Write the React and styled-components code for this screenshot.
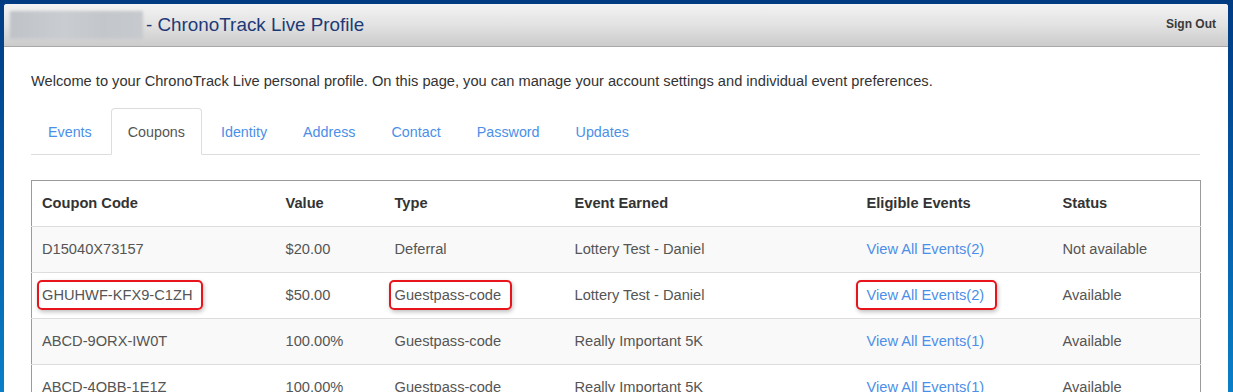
import React from "react";
import styled, { createGlobalStyle } from "styled-components";

const Global = createGlobalStyle`
  html, body { margin: 0; padding: 0; }
  body {
    background: linear-gradient(to bottom, #003b82 0%, #0459a6 45%, #0a86cd 100%);
    min-height: 392px;
    font-family: "Liberation Sans", Arial, sans-serif;
    font-size: 14.65px;
    color: #333;
    overflow: hidden;
  }
  #root { padding: 4px 5px 0 4px; }
`;

const Panel = styled.div`
  background: #fff;
  min-height: 420px;
  border-radius: 3px 3px 0 0;
  overflow: hidden;
`;

const Header = styled.header`
  height: 42px;
  display: flex;
  align-items: center;
  justify-content: space-between;
  padding: 0 12px 0 6px;
  background: linear-gradient(to bottom, #f3f3f3 0%, #e2e2e2 50%, #cbcbcb 100%);
  border-bottom: 1px solid #a9a9a9;
`;

const TitleWrap = styled.div`
  display: flex;
  align-items: center;
  gap: 3px;
`;

const Blur = styled.div`
  width: 133px;
  height: 28px;
  background: linear-gradient(to right, #bfc3c8 0%, #c9ccd0 40%, #c3c6ca 70%, #c6c9cd 100%);
  filter: blur(1.5px);
`;

const Title = styled.h1`
  margin: 0;
  font-size: 18.85px;
  font-weight: normal;
  color: #1d3a78;
`;

const SignOut = styled.a`
  font-size: 12px;
  font-weight: bold;
  color: #3a3a3a;
  text-decoration: none;
  margin-top: -3px;
`;

const Body = styled.div`
  padding: 24px 28px 0 27px;
`;

const Welcome = styled.p`
  margin: 0 0 17px;
  line-height: 20px;
  color: #333;
`;

const Tabs = styled.ul`
  list-style: none;
  margin: 0 0 25px;
  padding: 0;
  display: flex;
  border-bottom: 1px solid #ddd;
`;

const Tab = styled.li`
  margin: 0 2px -1px 0;
  padding: 0 16px;
  height: 45px;
  display: flex;
  align-items: center;
  font-size: 14.3px;
  border: 1px solid ${(p) => (p.$active ? "#ddd" : "transparent")};
  border-bottom-color: ${(p) => (p.$active ? "#fff" : "transparent")};
  border-radius: 4px 4px 0 0;
  background: ${(p) => (p.$active ? "#fff" : "transparent")};
  color: ${(p) => (p.$active ? "#555" : "#4b8fe8")};
`;

const Table = styled.table`
  width: 100%;
  border-collapse: collapse;
  border: 1px solid #9b9b9b;
  table-layout: fixed;
`;

const Th = styled.th`
  text-align: left;
  font-weight: bold;
  color: #333;
  padding: 12px 10px 13px;
  line-height: 20px;
  border-bottom: 1px solid #ddd;
`;

const Row = styled.tr`
  background: ${(p) => (p.$striped ? "#f9f9f9" : "#fff")};
`;

const Td = styled.td`
  padding: 12px 10px 13px;
  line-height: 20px;
  color: #555;
  border-top: 1px solid #ddd;
  white-space: nowrap;
`;

const Link = styled.a`
  color: #4b8fe8;
  text-decoration: none;
`;

const Mark = styled.span`
  position: relative;
  display: inline-block;
  &::after {
    content: "";
    position: absolute;
    top: -5px;
    bottom: -5px;
    left: ${(p) => -p.$l}px;
    right: ${(p) => -p.$r}px;
    border: 2px solid #e8141c;
    border-radius: 5px;
    box-shadow: 1px 2px 4px rgba(0, 0, 0, 0.25);
    pointer-events: none;
  }
`;

const tabs = ["Events", "Coupons", "Identity", "Address", "Contact", "Password", "Updates"];

const rows = [
  { code: "D15040X73157", value: "$20.00", type: "Deferral", event: "Lottery Test - Daniel", n: 2, status: "Not available" },
  { code: "GHUHWF-KFX9-C1ZH", value: "$50.00", type: "Guestpass-code", event: "Lottery Test - Daniel", n: 2, status: "Available", mark: true },
  { code: "ABCD-9ORX-IW0T", value: "100.00%", type: "Guestpass-code", event: "Really Important 5K", n: 1, status: "Available" },
  { code: "ABCD-4OBB-1E1Z", value: "100.00%", type: "Guestpass-code", event: "Really Important 5K", n: 1, status: "Available" },
];

const cols = [244, 109, 180, 292, 196, 148];

export default function App() {
  return (
    <>
      <Global />
      <Panel>
        <Header>
          <TitleWrap>
            <Blur />
            <Title>- ChronoTrack Live Profile</Title>
          </TitleWrap>
          <SignOut href="#">Sign Out</SignOut>
        </Header>
        <Body>
          <Welcome>
            Welcome to your ChronoTrack Live personal profile. On this page, you can manage your account settings and individual event preferences.
          </Welcome>
          <Tabs>
            {tabs.map((t) => (
              <Tab key={t} $active={t === "Coupons"}>{t}</Tab>
            ))}
          </Tabs>
          <Table>
            <colgroup>
              {cols.map((w, i) => (
                <col key={i} style={{ width: w }} />
              ))}
            </colgroup>
            <thead>
              <tr>
                <Th>Coupon Code</Th>
                <Th>Value</Th>
                <Th>Type</Th>
                <Th>Event Earned</Th>
                <Th>Eligible Events</Th>
                <Th>Status</Th>
              </tr>
            </thead>
            <tbody>
              {rows.map((r, i) => (
                <Row key={r.code} $striped={i % 2 === 0}>
                  <Td>{r.mark ? <Mark $l={5} $r={11}>{r.code}</Mark> : r.code}</Td>
                  <Td>{r.value}</Td>
                  <Td>{r.mark ? <Mark $l={6} $r={11}>{r.type}</Mark> : r.type}</Td>
                  <Td>{r.event}</Td>
                  <Td>
                    {r.mark ? (
                      <Mark $l={11} $r={13}><Link href="#">View All Events({r.n})</Link></Mark>
                    ) : (
                      <Link href="#">View All Events({r.n})</Link>
                    )}
                  </Td>
                  <Td>{r.status}</Td>
                </Row>
              ))}
            </tbody>
          </Table>
        </Body>
      </Panel>
    </>
  );
}
